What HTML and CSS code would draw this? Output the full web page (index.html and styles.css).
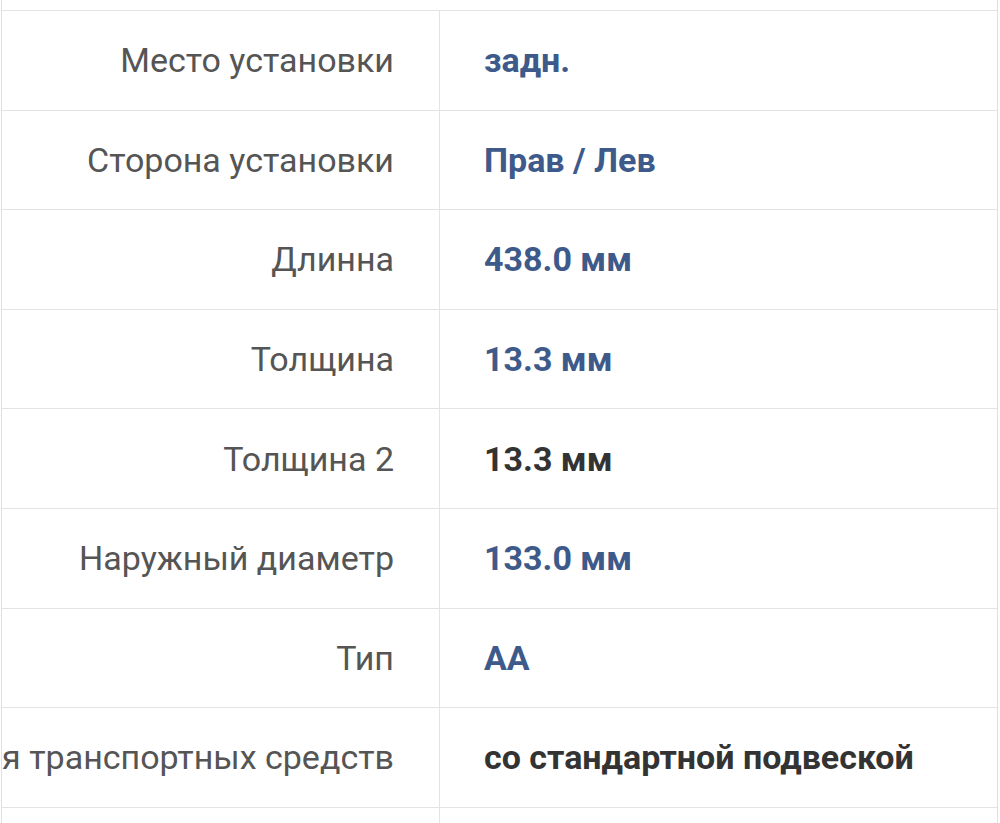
FILE: index.html
```html
<!DOCTYPE html>
<html lang="ru">
<head>
<meta charset="utf-8">
<title>Характеристики</title>
<link rel="stylesheet" href="styles.css">
</head>
<body>
<div class="specs">
  <div class="row">
    <div class="label"><span>Место установки</span></div>
    <div class="value link">задн.</div>
  </div>
  <div class="row">
    <div class="label"><span>Сторона установки</span></div>
    <div class="value link">Прав / Лев</div>
  </div>
  <div class="row">
    <div class="label"><span>Длинна</span></div>
    <div class="value link">438.0 мм</div>
  </div>
  <div class="row">
    <div class="label"><span>Толщина</span></div>
    <div class="value link">13.3 мм</div>
  </div>
  <div class="row">
    <div class="label"><span>Толщина 2</span></div>
    <div class="value">13.3 мм</div>
  </div>
  <div class="row">
    <div class="label"><span>Наружный диаметр</span></div>
    <div class="value link">133.0 мм</div>
  </div>
  <div class="row">
    <div class="label"><span>Тип</span></div>
    <div class="value link">AA</div>
  </div>
  <div class="row">
    <div class="label"><span>для транспортных средств</span></div>
    <div class="value">со стандартной подвеской</div>
  </div>
  <div class="row row-last">
    <div class="label"></div>
    <div class="value"></div>
  </div>
</div>
</body>
</html>
```

FILE: styles.css
```css
html, body {
  margin: 0;
  padding: 0;
  background: #ffffff;
}

body {
  width: 1000px;
  height: 823px;
  overflow: hidden;
  font-family: Roboto, "Liberation Sans", Arial, sans-serif;
}

.specs {
  margin-left: 1px;
  width: 997px;
  height: 823px;
  overflow: hidden;
  box-sizing: border-box;
  border-left: 1px solid #e0e0e0;
  border-right: 1px solid #e0e0e0;
  padding-top: 10px;
}

.row {
  display: grid;
  grid-template-columns: 438px 1fr;
  height: 99.6px;
  box-sizing: border-box;
  border-top: 1px solid #e3e3e3;
}

.row-last {
  height: 16px;
}

.label {
  display: flex;
  justify-content: flex-end;
  align-items: center;
  box-sizing: border-box;
  border-right: 1px solid #e3e3e3;
  padding-right: 45px;
  overflow: hidden;
  white-space: nowrap;
  font-size: 34px;
  color: #555555;
}

.label span {
  flex: none;
}

.value {
  display: flex;
  align-items: center;
  padding-left: 44px;
  white-space: nowrap;
  font-size: 34px;
  font-weight: 700;
  color: #333333;
}

.value.link {
  color: #3d5a8a;
}
```
